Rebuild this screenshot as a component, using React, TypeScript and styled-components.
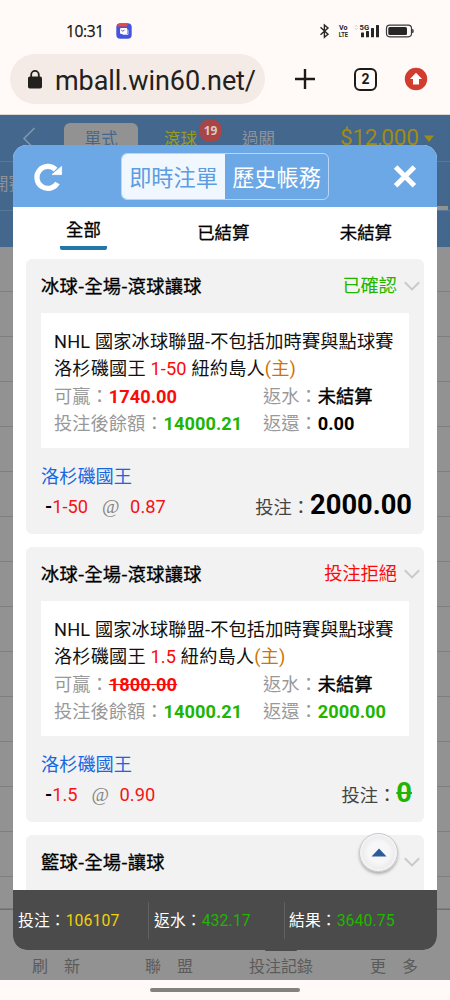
import React from "react";
import styled, { createGlobalStyle } from "styled-components";

const Global = createGlobalStyle`
  * { box-sizing: border-box; }
  body { margin: 0; background: #fffaf7; font-family: Roboto, "Noto Sans CJK TC", sans-serif; }
`;

const Screen = styled.div`
  width: 450px;
  height: 1000px;
  display: flex;
  flex-direction: column;
  overflow: hidden;
  background: #fffaf7;
  white-space: nowrap;
`;

const StatusBar = styled.div`
  height: 54px;
  padding: 7px 34px 0 66px;
  display: flex;
  align-items: center;
  justify-content: space-between;
`;
const StatusLeft = styled.div`
  display: flex;
  align-items: center;
  gap: 12px;
`;
const Clock = styled.span`
  font: 500 15.5px/20px "Open Sans", sans-serif;
  width: 38px;
  letter-spacing: -0.35px;
  color: #141414;
  -webkit-text-stroke: 0.25px #141414;
`;

const BrowserBar = styled.div`
  height: 61px;
  padding-left: 10px;
  display: flex;
  align-items: flex-start;
  border-bottom: 1px solid #ddd8d4;
`;
const AddressPill = styled.div`
  width: 255px;
  height: 50px;
  padding-left: 18px;
  border-radius: 25px;
  background: #f4ebe6;
  display: flex;
  align-items: center;
  gap: 13px;
`;
const Url = styled.span`
  font-size: 27px;
  line-height: 36px;
  letter-spacing: -0.08px;
  color: #22211d;
  padding-top: 4px;
`;
const BrowserActions = styled.div`
  display: flex;
  align-items: center;
  height: 50px;
  padding-left: 29px;
`;
const TabCount = styled.div`
  width: 23px;
  height: 23px;
  margin: 0 27px 0 38px;
  border: 2.5px solid #1c1b19;
  border-radius: 6px;
  font: 700 14px/19px "Roboto", sans-serif;
  text-align: center;
  color: #1c1b19;
`;

const Page = styled.div`
  position: relative;
  height: 865px;
  display: flex;
  flex-direction: column;
  background: #929292;
`;
const NavArea = styled.div`
  height: 132px;
  background: #44678e;
  color: #8d9398;
`;
const NavRow = styled.div`
  height: 47px;
  padding-left: 22px;
  display: flex;
  align-items: flex-start;
  border-bottom: 1px solid #587899;
`;
const NavPill = styled.div`
  margin: 8px 26px 0 27px;
  width: 74px;
  height: 36px;
  border-radius: 6px;
  background: #929292;
  color: #44678e;
  font-size: 16.5px;
  line-height: 34px;
  text-align: center;
`;
const NavText = styled.span<{ $color?: string }>`
  font-size: 16.5px;
  line-height: 50px;
  color: ${(p) => p.$color ?? "#8d9398"};
`;
const Count = styled.span`
  width: 23px;
  height: 23px;
  margin: 4px 20px 0 2px;
  border-radius: 50%;
  background: #aa4545;
  color: #d9c9c9;
  font: 700 12px/23px "Open Sans", sans-serif;
  text-align: center;
`;
const Balance = styled.span`
  width: 78px;
  margin-left: 65px;
  display: flex;
  justify-content: space-between;
  font-size: 22.6px;
  line-height: 46px;
  letter-spacing: -0.3px;
  color: #a08b14;
`;
const SubNav = styled.div`
  height: 49px;
  display: flex;
  justify-content: space-between;
  align-items: flex-end;
  border-bottom: 1px solid #587899;
`;
const SubText = styled.span`
  font-size: 16.5px;
  line-height: 51px;
  margin-left: -8px;
`;
const SubMark = styled.span`
  width: 22px;
  height: 4px;
  margin-right: 2px;
  background: #929292;
`;
const ListLine = styled.div<{ $h?: number }>`
  height: ${(p) => p.$h ?? 45}px;
  border-bottom: 1px solid #7f7f7f;
  flex: none;
`;
const BottomNav = styled.div`
  flex: 1;
  border-top: 1px solid #6f6f6f;
  display: flex;
  align-items: flex-end;
  padding: 0 0 2px 32px;
  color: #5b5b5b;
  font-size: 16px;
  line-height: 22px;
`;
const NavItem = styled.span<{ $w: number; $gap?: number; $current?: boolean }>`
  width: ${(p) => p.$w}px;
  word-spacing: ${(p) => p.$gap ?? 0}px;
  &::before {
    content: "";
    display: block;
    width: 32px;
    height: 2px;
    margin: 0 0 5px 16px;
    border-radius: 1px;
    background: ${(p) => (p.$current ? "#4b4b4b" : "transparent")};
  }
`;

const Dialog = styled.section`
  position: absolute;
  left: 13px;
  top: 30px;
  width: 424px;
  height: 805px;
  border-radius: 14px;
  overflow: hidden;
  background: #fff;
  display: flex;
  flex-direction: column;
`;
const DialogHead = styled.header`
  height: 62px;
  flex: none;
  padding: 1px 19px 0 19px;
  background: #6ca7e6;
  display: flex;
  align-items: center;
  justify-content: space-between;
`;
const Segments = styled.div`
  width: 208px;
  height: 47px;
  margin-left: 6px;
  margin-right: 12px;
  border: 1px solid #b9d6f5;
  border-radius: 6px;
  display: flex;
  overflow: hidden;
`;
const Segment = styled.div<{ $on?: boolean }>`
  width: 103px;
  font-size: 22.2px;
  line-height: 48px;
  text-align: center;
  color: ${(p) => (p.$on ? "#5c9ce0" : "#fff")};
  background: ${(p) => (p.$on ? "#f1f7fe" : "transparent")};
`;

const Filters = styled.nav`
  height: 52px;
  flex: none;
  display: flex;
  justify-content: space-between;
  padding: 10px 45px 0 47px;
`;
const Filter = styled.div<{ $on?: boolean }>`
  height: 33px;
  padding: 0 ${(p) => (p.$on ? 6 : 0)}px;
  border-bottom: 4px solid ${(p) => (p.$on ? "#2476a8" : "transparent")};
  border-radius: 2px;
  font-size: 17.4px;
  line-height: ${(p) => (p.$on ? 26 : 32)}px;
  color: #000;
  -webkit-text-stroke: 0.3px #000;
`;

const Cards = styled.div`
  flex: 1;
  min-height: 0;
  overflow: hidden;
  padding: 0 13px;
  display: flex;
  flex-direction: column;
  gap: 13px;
`;
const Card = styled.article`
  height: 275px;
  flex: none;
  padding: 0 15px;
  border-radius: 6px;
  background: #f2f2f2;
`;
const CardHead = styled.div`
  height: 54px;
  margin-right: -12px;
  display: flex;
  align-items: center;
  gap: 6px;
`;
const Title = styled.h2`
  flex: 1;
  margin: 0;
  padding-bottom: 2px;
  font: 400 18.2px/50px "Noto Sans CJK TC", sans-serif;
  letter-spacing: 0.25px;
  color: #000;
  -webkit-text-stroke: 0.3px #000;
`;
const Tone = styled.span<{ $c: string }>`
  color: ${(p) => p.$c};
`;
const State = styled(Tone)`
  font-size: 18.2px;
  line-height: 54px;
`;
const Panel = styled.div`
  width: 368px;
  height: 135px;
  padding: 15px 13px;
  background: #fff;
  color: #111;
  font-size: 18.2px;
`;
const Line = styled.div`
  height: 27.4px;
  line-height: 27.4px;
  letter-spacing: 0.06px;
  display: flex;
`;
const Text = styled.div`
  height: 27.4px;
  line-height: 27.4px;
  letter-spacing: 0.16px;
`;
const Cell = styled.div<{ $w?: number }>`
  width: ${(p) => (p.$w ? `${p.$w}px` : "auto")};
  color: #999;
`;
const Value = styled.b<{ $c?: string; $struck?: boolean }>`
  color: ${(p) => p.$c ?? "#000"};
  text-decoration: ${(p) => (p.$struck ? "line-through" : "none")};
`;
const Mark = styled.span`
  color: #000;
  -webkit-text-stroke: 0.4px #000;
`;
const Team = styled.div`
  margin-top: 14px;
  height: 27px;
  font-size: 18.2px;
  line-height: 29px;
  color: #1767e0;
`;
const BetRow = styled.div`
  height: 34px;
  margin-right: -3px;
  padding-left: 4px;
  display: flex;
  justify-content: space-between;
  align-items: center;
  font-size: 18.3px;
`;
const Odds = styled.div`
  display: flex;
  align-items: baseline;
  padding-top: 1px;
  color: #f51414;
`;
const At = styled.span`
  width: 19px;
  margin: 0 9px 0 14px;
  font: 19px "Liberation Serif", serif;
  color: #858585;
`;
const Stake = styled.div`
  display: flex;
  align-items: baseline;
  color: #444;
  line-height: 34px;
`;
const Amount = styled(Value)`
  font-size: 27.3px;
`;

const Totals = styled.footer`
  height: 60px;
  flex: none;
  display: flex;
  align-items: center;
  background: #4b4b4b;
`;
const Total = styled.div<{ $w: number }>`
  width: ${(p) => p.$w}px;
  height: 37px;
  padding-left: 5px;
  font-size: 15.8px;
  line-height: 38px;
  letter-spacing: 0.08px;
  color: #fff;
  border-right: 1px solid #616161;
  &:last-child { border: 0; padding-left: 4px; }
`;
const TopButton = styled.button`
  position: absolute;
  left: 346px;
  top: 688px;
  width: 39px;
  height: 39px;
  padding: 0;
  display: grid;
  place-items: center;
  border: 1.5px solid #c6c6c8;
  border-radius: 50%;
  background: radial-gradient(circle, #f7f7f8 40%, #ededef 60%, #fafafa 75%);
  box-shadow: 0 2px 3px rgba(0, 0, 0, 0.28);
`;
const GestureArea = styled.div`
  height: 20px;
  padding-top: 8px;
  display: flex;
  justify-content: center;
`;
const Gesture = styled.div`
  width: 150px;
  height: 4px;
  border-radius: 2px;
  background: #83827e;
`;

const GREEN = "#21b500";
const RED = "#fb0a0a";

const Chevron = () => (
  <svg width="18" height="12" viewBox="0 0 18 12">
    <path d="M1.8 2.2 9 9.4l7.2-7.2" fill="none" stroke="#c9c9c9" strokeWidth="2" />
  </svg>
);

const StatusIcons = () => (
  <svg width="98" height="16" viewBox="318 22 98 16" fill="#262626">
    <path d="M320.5 26.2l7.5 7-3.6 3V24l3.6 3-7.5 6.8" fill="none" stroke="#262626" strokeWidth="1.4" />
    <g fontFamily="Roboto" fontWeight="700" fontSize="7.4">
      <text x="339" y="29.2" textLength="8.5" lengthAdjust="spacingAndGlyphs">Vo</text>
      <text x="338.7" y="36.2" textLength="9.3" lengthAdjust="spacingAndGlyphs">LTE</text>
      <text x="359.5" y="29.2" textLength="9.6" lengthAdjust="spacingAndGlyphs">5G</text>
    </g>
    <path d="M355 25.8l1.3-1.5 1.3 1.5M355 27.2l1.3 1.5 1.3-1.5" fill="none" stroke="#c7c3c0" strokeWidth=".8" />
    <rect x="361" y="31.5" width="3" height="4.7" rx=".5" />
    <rect x="366" y="30" width="3" height="6.2" rx=".5" />
    <rect x="371" y="27" width="3" height="9.2" rx=".5" />
    <rect x="376" y="24" width="3" height="12.2" rx=".5" />
    <rect x="386.5" y="24.2" width="25" height="11.6" rx="3.2" fill="none" stroke="#383838" strokeWidth="1.2" />
    <rect x="388.3" y="26" width="18.7" height="8" rx="1.5" />
    <path d="M412.7 28.2q1.2 1.8 0 3.8z" stroke="#383838" strokeWidth=".8" />
  </svg>
);

interface BetProps {
  state: string;
  stateColor: string;
  handicap: string;
  odds: string;
  win: string;
  voided?: boolean;
  refund: string;
  stake: string;
}

const Bet = ({ state, stateColor, handicap, odds, win, voided, refund, stake }: BetProps) => (
  <Card>
    <CardHead>
      <Title>冰球-全場-滾球讓球</Title>
      <State $c={stateColor}>{state}</State>
      <Chevron />
    </CardHead>
    <Panel>
      <Text>NHL 國家冰球聯盟-不包括加時賽與點球賽</Text>
      <Text>
        洛杉磯國王 <Tone $c={RED}>{handicap}</Tone> 紐約島人<Tone $c="#cf7400">(主)</Tone>
      </Text>
      <Line>
        <Cell $w={209}>可贏：<Value $c={RED} $struck={voided}>{win}</Value></Cell>
        <Cell>返水：<Mark>未結算</Mark></Cell>
      </Line>
      <Line>
        <Cell $w={209}>投注後餘額：<Value $c={GREEN}>14000.21</Value></Cell>
        <Cell>返還：<Value $c={voided ? GREEN : undefined}>{refund}</Value></Cell>
      </Line>
    </Panel>
    <Team>洛杉磯國王</Team>
    <BetRow>
      <Odds>
        <Value>-</Value>{handicap}<At>@</At>{odds}
      </Odds>
      <Stake>
        投注：<Amount $c={voided ? GREEN : undefined} $struck={voided}>{stake}</Amount>
      </Stake>
    </BetRow>
  </Card>
);

export default function App() {
  return (
    <Screen>
      <Global />
      <StatusBar>
        <StatusLeft>
          <Clock>10:31</Clock>
          <svg width="16" height="16" viewBox="0 0 16 16">
            <rect x=".3" y=".3" width="15.4" height="15.4" rx="4" fill="#4355dc" />
            <path d="M1 3.5Q2 .3 4.3.3h7.4Q11.5 2.5 11 3.5z" fill="#e54846" />
            <rect x="4" y="5" width="7.3" height="6" rx="1.2" fill="#fff" />
            <path d="M5.3 7l1.5 1.2L8.5 7" fill="none" stroke="#4355dc" />
            <path d="M12 7v4.5H6.5" fill="none" stroke="#c9d2ff" />
          </svg>
        </StatusLeft>
        <StatusIcons />
      </StatusBar>
      <BrowserBar>
        <AddressPill>
          <svg width="14" height="19" viewBox="0 0 14 19">
            <path d="M3.2 8V4.7a3.8 3.8 0 0 1 7.6 0V8" fill="none" stroke="#22211d" strokeWidth="1.8" />
            <rect y="6.5" width="14" height="12" rx="1.8" fill="#22211d" />
          </svg>
          <Url>mball.win60.net/</Url>
        </AddressPill>
        <BrowserActions>
          <svg width="22" height="22" viewBox="0 0 22 22">
            <path d="M11 1v20M1 11h20" stroke="#1c1b19" strokeWidth="2.4" />
          </svg>
          <TabCount>2</TabCount>
          <svg width="24" height="24" viewBox="0 0 24 24">
            <circle cx="12" cy="12" r="11.2" fill="#d13c2e" />
            <path d="M12 5.8 18 12h-3v5.5H9V12H6z" fill="#fff" />
          </svg>
        </BrowserActions>
      </BrowserBar>

      <Page>
        <NavArea>
          <NavRow>
            <svg width="15" height="40" viewBox="0 0 15 40">
              <path d="M12.5 13 2 23.5 12.5 34" fill="none" stroke="#8096ac" strokeWidth="1.6" />
            </svg>
            <NavPill>單式</NavPill>
            <NavText $color="#9b9b1b">滾球</NavText>
            <Count>19</Count>
            <NavText>過關</NavText>
            <Balance>
              <span>$</span>
              <span>12,000</span>
            </Balance>
            <svg width="18" height="46" viewBox="0 0 18 46">
              <path d="M6 20.5h10L11 27z" fill="#a08b14" />
            </svg>
          </NavRow>
          <SubNav>
            <SubText>開賽</SubText>
            <SubMark />
          </SubNav>
        </NavArea>
        {Array.from({ length: 14 }, (_, i) => (
          <ListLine key={i} />
        ))}
        <ListLine $h={32} />
        <BottomNav>
          <NavItem $w={113} $gap={12}>刷 新</NavItem>
          <NavItem $w={104} $gap={12}>聯 盟</NavItem>
          <NavItem $w={121} $current>投注記錄</NavItem>
          <NavItem $w={50} $gap={12}>更 多</NavItem>
        </BottomNav>

        <Dialog>
          <DialogHead>
            <svg width="32" height="32" viewBox="0 0 32 32">
              <path d="M25.4 22A11 11 0 1 1 23.6 8.6" fill="none" stroke="#fff" strokeWidth="5.2" />
              <path d="M29.6 5.4v8.2H20z" fill="#fff" stroke="#fff" strokeWidth=".8" />
            </svg>
            <Segments>
              <Segment $on>即時注單</Segment>
              <Segment>歷史帳務</Segment>
            </Segments>
            <svg width="26" height="26" viewBox="0 0 26 26">
              <path d="M3.6 3l18.8 18.8M22.4 3 3.6 21.8" stroke="#fff" strokeWidth="5" />
            </svg>
          </DialogHead>
          <Filters>
            <Filter $on>全部</Filter>
            <Filter>已結算</Filter>
            <Filter>未結算</Filter>
          </Filters>
          <Cards>
            <Bet state="已確認" stateColor={GREEN} handicap="1-50" odds="0.87" win="1740.00" refund="0.00" stake="2000.00" />
            <Bet state="投注拒絕" stateColor={RED} handicap="1.5" odds="0.90" win="1800.00" voided refund="2000.00" stake="0" />
            <Card>
              <CardHead>
                <Title>籃球-全場-讓球</Title>
                <Chevron />
              </CardHead>
            </Card>
          </Cards>
          <Totals>
            <Total $w={136}>投注：<Tone $c="#efd20a">106107</Tone></Total>
            <Total $w={136}>返水：<Tone $c={GREEN}>432.17</Tone></Total>
            <Total $w={152}>結果：<Tone $c={GREEN}>3640.75</Tone></Total>
          </Totals>
          <TopButton>
            <svg width="16" height="9" viewBox="0 0 16 9">
              <path d="M8 .5 15.5 8.5H.5z" fill="#2c5c9d" />
            </svg>
          </TopButton>
        </Dialog>
      </Page>
      <GestureArea>
        <Gesture />
      </GestureArea>
    </Screen>
  );
}
